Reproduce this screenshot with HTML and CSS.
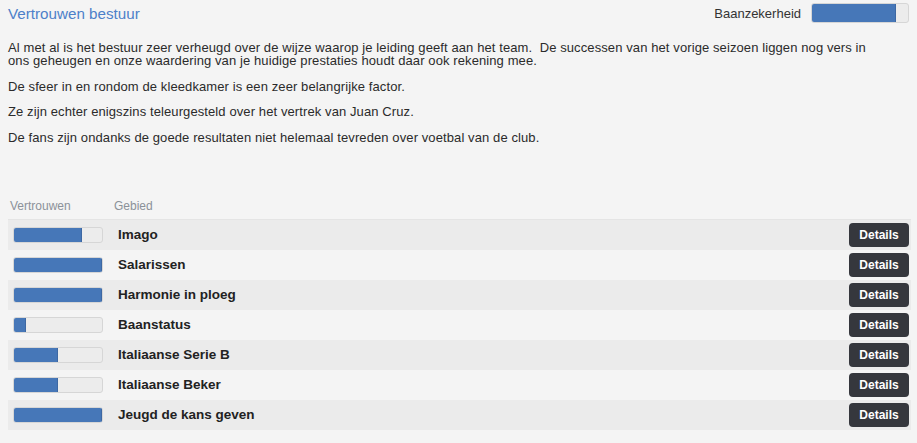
FILE: index.html
```html
<!DOCTYPE html>
<html lang="nl">
<head>
  <meta charset="UTF-8">
  <title>Vertrouwen bestuur</title>
  <link rel="stylesheet" href="styles.css">
</head>
<body>
  <div class="board">
    <div class="board-head">
      <h2>Vertrouwen bestuur</h2>
      <div class="security">
        Baanzekerheid
        <div class="bar bar-top"><div class="fill" style="width: 87%;"></div></div>
      </div>
    </div>

    <div class="summary">
      <p>Al met al is het bestuur zeer verheugd over de wijze waarop je leiding geeft aan het team.&nbsp; De successen van het vorige seizoen liggen nog vers in ons geheugen en onze waardering van je huidige prestaties houdt daar ook rekening mee.</p>
      <p>De sfeer in en rondom de kleedkamer is een zeer belangrijke factor.</p>
      <p>Ze zijn echter enigszins teleurgesteld over het vertrek van Juan Cruz.</p>
      <p>De fans zijn ondanks de goede resultaten niet helemaal tevreden over voetbal van de club.</p>
    </div>

    <table class="areas">
      <thead>
        <tr>
          <th class="col-bar">Vertrouwen</th>
          <th>Gebied</th>
          <th></th>
        </tr>
      </thead>
      <tbody>
        <tr>
          <td class="col-bar"><div class="bar"><div class="fill" style="width: 77%;"></div></div></td>
          <td class="name">Imago</td>
          <td class="col-btn"><button>Details</button></td>
        </tr>
        <tr>
          <td class="col-bar"><div class="bar"><div class="fill" style="width: 100%;"></div></div></td>
          <td class="name">Salarissen</td>
          <td class="col-btn"><button>Details</button></td>
        </tr>
        <tr>
          <td class="col-bar"><div class="bar"><div class="fill" style="width: 100%;"></div></div></td>
          <td class="name">Harmonie in ploeg</td>
          <td class="col-btn"><button>Details</button></td>
        </tr>
        <tr>
          <td class="col-bar"><div class="bar"><div class="fill" style="width: 14%;"></div></div></td>
          <td class="name">Baanstatus</td>
          <td class="col-btn"><button>Details</button></td>
        </tr>
        <tr>
          <td class="col-bar"><div class="bar"><div class="fill" style="width: 50%;"></div></div></td>
          <td class="name">Italiaanse Serie B</td>
          <td class="col-btn"><button>Details</button></td>
        </tr>
        <tr>
          <td class="col-bar"><div class="bar"><div class="fill" style="width: 50%;"></div></div></td>
          <td class="name">Italiaanse Beker</td>
          <td class="col-btn"><button>Details</button></td>
        </tr>
        <tr>
          <td class="col-bar"><div class="bar"><div class="fill" style="width: 100%;"></div></div></td>
          <td class="name">Jeugd de kans geven</td>
          <td class="col-btn"><button>Details</button></td>
        </tr>
      </tbody>
    </table>
  </div>
</body>
</html>
```

FILE: styles.css
```css
body {
  font-family: "Liberation Sans", Arial, sans-serif;
  font-size: 13px;
  color: #2b2b2b;
  background: #f4f4f4;
  margin: 0;
}

.board {
  padding: 3px 6px 0 8px;
}

.board-head {
  display: flex;
  justify-content: space-between;
  align-items: center;
  height: 20px;
}

h2 {
  margin: 0;
  font-size: 15.2px;
  font-weight: normal;
  color: #4d80c9;
}

.security {
  display: flex;
  align-items: center;
  gap: 10px;
  font-size: 13px;
  color: #333;
  padding-right: 2px;
}

.bar {
  width: 88px;
  height: 14px;
  background: #ececec;
  border: 1px solid #d6d6d6;
  border-radius: 3px;
  overflow: hidden;
}

.bar-top {
  width: 96px;
  height: 18px;
}

.fill {
  height: 100%;
  background: #4677b8;
  border-right: 1px solid #3d68a3;
  box-sizing: border-box;
}

.summary {
  margin-top: 18px;
  width: 870px;
  letter-spacing: 0.1px;
}

.summary p {
  margin: 0 0 12.5px;
  line-height: 13px;
}

.areas {
  width: 903px;
  margin-top: 55px;
  border-collapse: collapse;
}

.areas th {
  text-align: left;
  font-weight: normal;
  font-size: 12px;
  color: #8b9199;
  padding: 0 0 6px 0;
  border-bottom: 1px solid #e4e4e4;
}

.areas th.col-bar {
  width: 104px;
  padding-left: 2px;
}

.areas td {
  height: 30px;
  padding: 0;
  vertical-align: middle;
}

.areas tbody tr:nth-child(odd) {
  background: #ebebeb;
}

.areas td.col-bar {
  padding-left: 5px;
}

.areas td.name {
  font-weight: bold;
  font-size: 13.5px;
  color: #222;
  padding-left: 4px;
}

.areas td.col-btn {
  text-align: right;
  padding-right: 2px;
}

button {
  font-family: inherit;
  font-size: 12px;
  font-weight: bold;
  color: #fff;
  background: #35373d;
  border: none;
  border-radius: 4px;
  width: 60px;
  height: 24px;
  cursor: pointer;
}
```
